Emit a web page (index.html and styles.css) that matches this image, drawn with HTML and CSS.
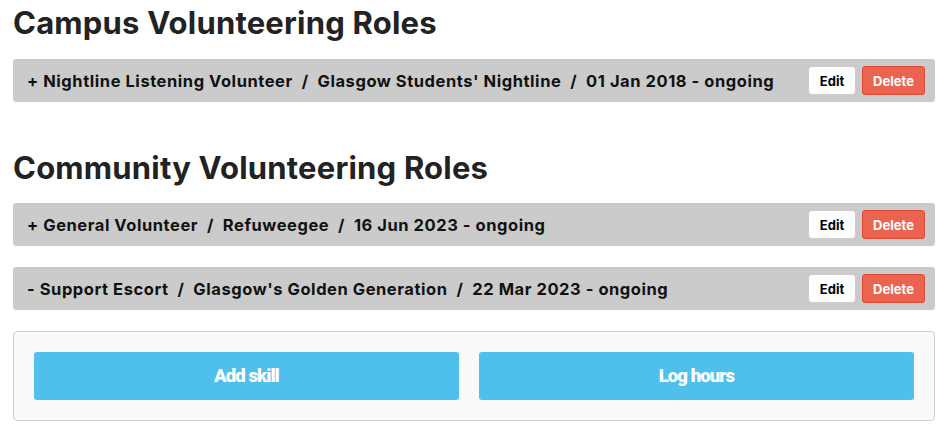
FILE: index.html
```html
<!DOCTYPE html>
<html>
<head>
<meta charset="utf-8">
<link rel="stylesheet" href="styles.css">
</head>
<body>
<div class="page">
  <h2 class="section-title">Campus Volunteering Roles</h2>
  <div class="role-list">
    <div class="role">
      <span class="role-text">+ Nightline Listening Volunteer &nbsp;/&nbsp; Glasgow Students' Nightline &nbsp;/&nbsp; 01 Jan 2018 - ongoing</span>
      <div class="actions"><button class="btn-edit">Edit</button><button class="btn-delete">Delete</button></div>
    </div>
  </div>
  <h2 class="section-title second">Community Volunteering Roles</h2>
  <div class="role-list">
    <div class="role">
      <span class="role-text">+ General Volunteer &nbsp;/&nbsp; Refuweegee &nbsp;/&nbsp; 16 Jun 2023 - ongoing</span>
      <div class="actions"><button class="btn-edit">Edit</button><button class="btn-delete">Delete</button></div>
    </div>
    <div class="role">
      <span class="role-text">- Support Escort &nbsp;/&nbsp; Glasgow's Golden Generation &nbsp;/&nbsp; 22 Mar 2023 - ongoing</span>
      <div class="actions"><button class="btn-edit">Edit</button><button class="btn-delete">Delete</button></div>
    </div>
  </div>
  <div class="panel">
    <button class="btn-main">Add skill</button>
    <button class="btn-main">Log hours</button>
  </div>
</div>
</body>
</html>
```
FILE: styles.css
```css
* { box-sizing: border-box; }
body { margin: 0; background: #fff; color: #1c1c1c; font-family: "Inter", "Liberation Sans", sans-serif; }
.page { padding: 0 14px 0 13px; }
.section-title { margin: 0; padding-top: 5px; height: 59px; font-size: 31px; font-weight: 700; letter-spacing: 0.2px; color: #222; line-height: 36px; }
.section-title.second { margin-top: 48px; height: 53px; padding-top: 0; }
.role-list { display: flex; flex-direction: column; gap: 21px; }
.role { height: 43px; background: #cbcbcb; border-radius: 3px; display: flex; align-items: center; justify-content: space-between; padding: 0 10px 0 14px; }
.role-text { font-size: 16.5px; font-weight: 700; color: #111; white-space: pre; letter-spacing: 0.55px; }
.actions { display: flex; gap: 7px; align-items: center; }
.btn-edit { height: 27px; width: 46px; background: #fff; border: none; border-radius: 3px; font-family: inherit; font-size: 13px; font-weight: 700; color: #000; padding: 0; }
.btn-delete { height: 29px; width: 63px; background: #ec6450; border: 1px solid #dd4a33; border-radius: 3px; font-family: inherit; font-size: 13px; font-weight: 700; color: #fff; padding: 0; }
.panel { margin-top: 21px; height: 90px; background: #f9f9f9; border: 1px solid #cfcfcf; border-radius: 4px; padding: 20px 20px; display: flex; gap: 20px; }
.btn-main { flex: 1 1 auto; height: 48px; background: #4fbfec; border: none; border-radius: 3px; color: #fff; font-family: "Roboto", sans-serif; font-size: 18.5px; font-weight: 900; letter-spacing: -0.9px; }
```
